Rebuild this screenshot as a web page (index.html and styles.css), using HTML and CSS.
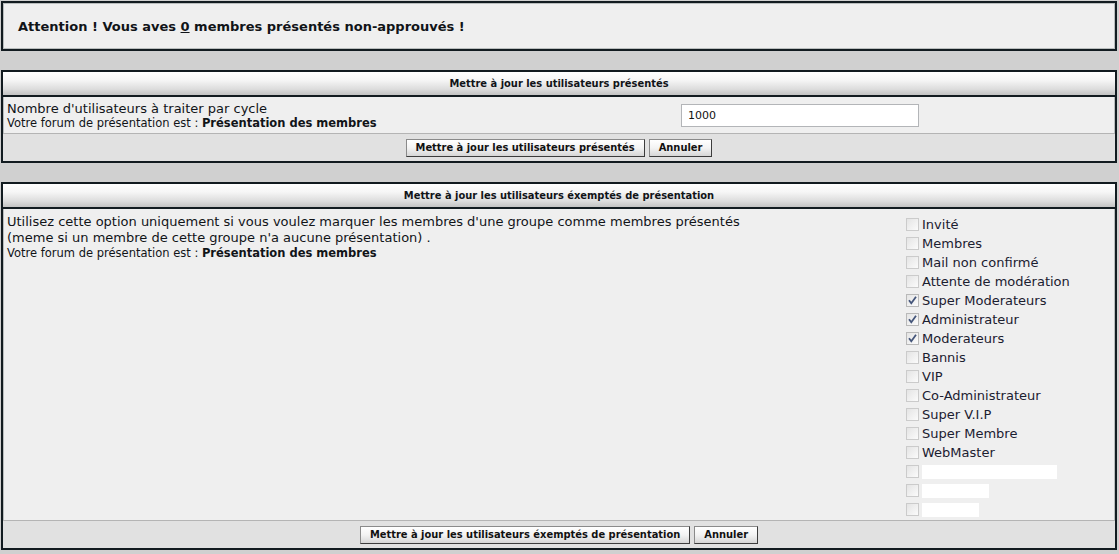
FILE: index.html
```html
<!DOCTYPE html>
<html lang="fr">
<head>
<meta charset="utf-8">
<title>Membres présentés</title>
<link rel="stylesheet" href="styles.css">
</head>
<body>
<div class="page">
  <div class="box notice">
    <b>Attention ! Vous aves <u>0</u> membres présentés non-approuvés !</b>
  </div>

  <div class="box">
    <div class="head">Mettre à jour les utilisateurs présentés</div>
    <div class="cycle">
      <div class="label">
        <div class="big">Nombre d'utilisateurs à traiter par cycle</div>
        <div class="small">Votre forum de présentation est : <b>Présentation des membres</b></div>
      </div>
      <div class="field"><input class="num" type="text" value="1000"></div>
    </div>
    <div class="actions">
      <button class="btn">Mettre à jour les utilisateurs présentés</button>
      <button class="btn">Annuler</button>
    </div>
  </div>

  <div class="box">
    <div class="head">Mettre à jour les utilisateurs éxemptés de présentation</div>
    <div class="exempt">
      <div class="label">
        <div class="big">Utilisez cette option uniquement si vous voulez marquer les membres d'une groupe comme membres présentés<br>(meme si un membre de cette groupe n'a aucune présentation) .</div>
        <div class="small">Votre forum de présentation est : <b>Présentation des membres</b></div>
      </div>
      <div class="groups">
        <label class="opt"><span class="cb"></span>Invité</label>
        <label class="opt"><span class="cb"></span>Membres</label>
        <label class="opt"><span class="cb"></span>Mail non confirmé</label>
        <label class="opt"><span class="cb"></span>Attente de modération</label>
        <label class="opt"><span class="cb on"><svg viewBox="0 0 13 13" width="13" height="13"><path d="M3 6.2 L5.3 9.2 L10 2.8" fill="none" stroke="#44557a" stroke-width="1.8"/></svg></span>Super Moderateurs</label>
        <label class="opt"><span class="cb on"><svg viewBox="0 0 13 13" width="13" height="13"><path d="M3 6.2 L5.3 9.2 L10 2.8" fill="none" stroke="#44557a" stroke-width="1.8"/></svg></span>Administrateur</label>
        <label class="opt"><span class="cb on"><svg viewBox="0 0 13 13" width="13" height="13"><path d="M3 6.2 L5.3 9.2 L10 2.8" fill="none" stroke="#44557a" stroke-width="1.8"/></svg></span>Moderateurs</label>
        <label class="opt"><span class="cb"></span>Bannis</label>
        <label class="opt"><span class="cb"></span>VIP</label>
        <label class="opt"><span class="cb"></span>Co-Administrateur</label>
        <label class="opt"><span class="cb"></span>Super V.I.P</label>
        <label class="opt"><span class="cb"></span>Super Membre</label>
        <label class="opt"><span class="cb"></span>WebMaster</label>
        <label class="opt"><span class="cb"></span><span class="redact r1"></span></label>
        <label class="opt"><span class="cb"></span><span class="redact r2"></span></label>
        <label class="opt"><span class="cb"></span><span class="redact r3"></span></label>
      </div>
    </div>
    <div class="actions">
      <button class="btn">Mettre à jour les utilisateurs éxemptés de présentation</button>
      <button class="btn">Annuler</button>
    </div>
  </div>
</div>
</body>
</html>
```

FILE: styles.css
```css
html, body {
  margin: 0;
  padding: 0;
}
body {
  background: #d0d0d0;
  font-family: "DejaVu Sans", Verdana, sans-serif;
  color: #111418;
}
.page {
  display: flex;
  flex-direction: column;
  gap: 19px;
  padding: 1px 2px 0 1px;
}
.box {
  border: 2px solid #121b20;
  background: #efefef;
  box-shadow: inset 0 0 0 1px #b9bdbd;
}
.notice {
  height: 46px;
  display: flex;
  align-items: center;
  padding-left: 15px;
  font-size: 13px;
}
.notice b {
  font-weight: bold;
}
.head {
  height: 23px;
  line-height: 23px;
  border-bottom: 2px solid #121b20;
  background: linear-gradient(#ffffff 0%, #f6f6f6 35%, #dcdcdc 75%, #c3c3c3 100%);
  text-align: center;
  font-family: "DejaVu Sans Condensed", "DejaVu Sans", sans-serif;
  font-weight: bold;
  font-size: 11px;
}
.big {
  font-size: 13px;
  line-height: 15px;
}
.small {
  font-size: 11.5px;
  line-height: 14px;
}
.small b {
  font-weight: bold;
}
.cycle {
  display: grid;
  grid-template-columns: 678px 1fr;
  align-items: center;
  height: 36px;
  border-bottom: 1px solid #b4b4b4;
}
.cycle .label {
  padding-left: 4px;
  padding-top: 1px;
}
.num {
  box-sizing: border-box;
  width: 238px;
  height: 23px;
  margin: 0;
  border: 1px solid #b3b5b8;
  background: #fff;
  padding: 0 6px;
  font-family: "DejaVu Sans", Verdana, sans-serif;
  font-size: 11px;
  color: #111;
}
.actions {
  height: 27px;
  background: #e1e1e1;
  display: flex;
  justify-content: center;
  align-items: center;
  gap: 4px;
}
.btn {
  box-sizing: border-box;
  height: 18px;
  margin: 0;
  padding: 0 9px;
  border: 1px solid #8a8a8a;
  border-right-color: #3c3c3c;
  border-bottom-color: #3c3c3c;
  background: linear-gradient(#ffffff 0%, #f3f3f3 50%, #d6d6d6 100%);
  font-family: "DejaVu Sans Condensed", "DejaVu Sans", sans-serif;
  font-weight: bold;
  font-size: 11px;
  line-height: 16px;
  color: #111;
}
.exempt {
  display: grid;
  grid-template-columns: 1fr 209px;
  height: 311px;
  border-bottom: 1px solid #b4b4b4;
}
.exempt .label {
  padding: 5px 0 0 4px;
}
.exempt .big {
  line-height: 16px;
}
.groups {
  display: flex;
  flex-direction: column;
  padding-top: 6px;
}
.opt {
  display: flex;
  align-items: center;
  height: 19px;
  font-size: 13px;
  color: #1b2030;
}
.cb {
  box-sizing: border-box;
  width: 13px;
  height: 13px;
  margin-right: 3px;
  border: 1px solid #cbcbcb;
  background: linear-gradient(135deg, #e4e4e4, #fbfbfb);
  display: flex;
}
.cb.on {
  border-color: #b9b9b9;
}
.cb svg {
  display: block;
  margin: -1px;
}
.redact {
  display: block;
  height: 14px;
  background: #ffffff;
}
.r1 { width: 135px; }
.r2 { width: 67px; }
.r3 { width: 57px; }
```
